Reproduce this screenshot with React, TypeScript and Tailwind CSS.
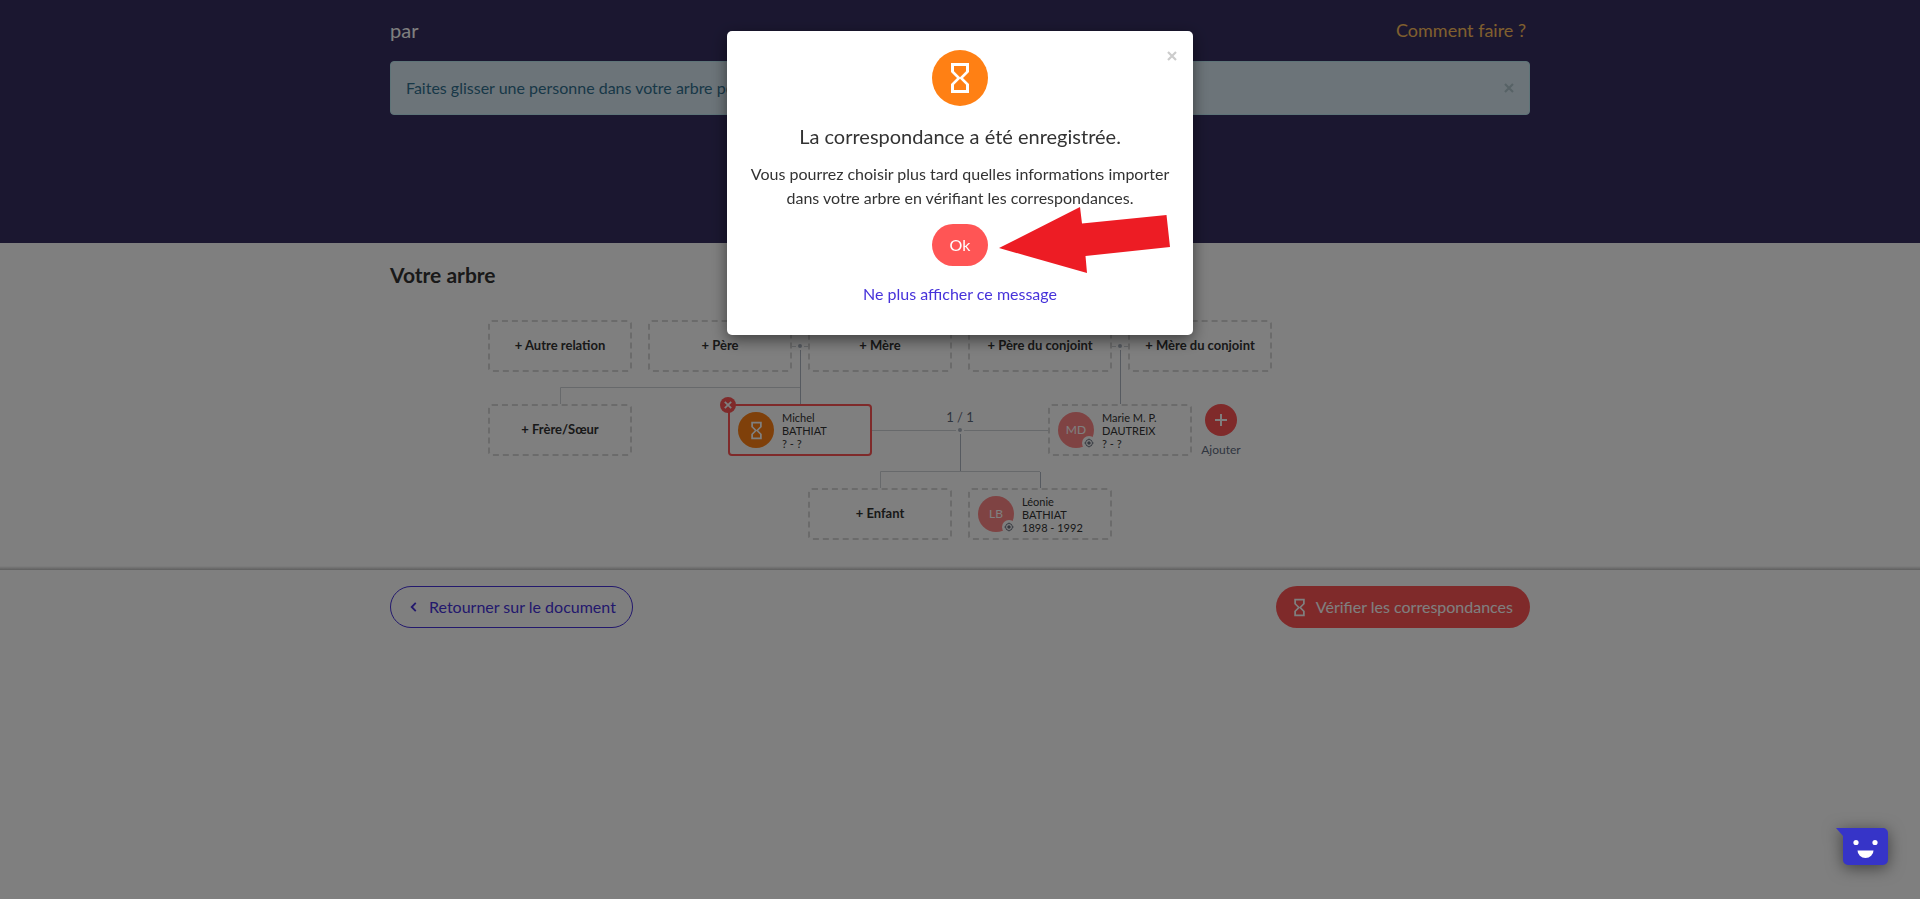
import React from "react";
import { MdHourglassEmpty, MdMyLocation } from "react-icons/md";

type Point = { left: string; top: string };

const emptySlots: { label: string; pos: Point }[] = [
  { label: "+ Autre relation", pos: { left: "left-0", top: "top-0" } },
  { label: "+ Père", pos: { left: "left-[160px]", top: "top-0" } },
  { label: "+ Mère", pos: { left: "left-[320px]", top: "top-0" } },
  { label: "+ Père du conjoint", pos: { left: "left-[480px]", top: "top-0" } },
  { label: "+ Mère du conjoint", pos: { left: "left-[640px]", top: "top-0" } },
  { label: "+ Frère/Sœur", pos: { left: "left-0", top: "top-[84px]" } },
  { label: "+ Enfant", pos: { left: "left-[320px]", top: "top-[168px]" } },
];

const people = [
  {
    initials: "",
    first: "Michel",
    last: "BATHIAT",
    dates: "? - ?",
    pos: { left: "left-[240px]", top: "top-[84px]" },
  },
  {
    initials: "MD",
    first: "Marie M. P.",
    last: "DAUTREIX",
    dates: "? - ?",
    pos: { left: "left-[560px]", top: "top-[84px]" },
  },
  {
    initials: "LB",
    first: "Léonie",
    last: "BATHIAT",
    dates: "1898 - 1992",
    pos: { left: "left-[480px]", top: "top-[168px]" },
  },
];

function Cross({ className }: { className: string }) {
  return (
    <svg viewBox="0 0 10 10" className={className} fill="none" stroke="currentColor" aria-hidden="true">
      <path d="M1 1 9 9M9 1 1 9" strokeWidth="2.2" />
    </svg>
  );
}

function Connectors() {
  return (
    <svg
      className="absolute left-0 top-0"
      width="784"
      height="220"
      viewBox="0 0 784 220"
      fill="none"
      aria-hidden="true"
    >
      <g stroke="#cfd3d7">
        <path d="M72.500 84V67.500H312" />
        <path d="M304 26.500h4M316 26.500h4M624 26.500h4M636 26.500h4" />
        <path d="M384 110.500h84M476 110.500h84" />
        <path d="M392.500 168V151.500H552" />
      </g>
      <g stroke="#acb4c0">
        <path d="M312.500 30V84M632.500 30V84M472.500 114V151M552.500 152V168" />
      </g>
      <g fill="#acb4c0">
        <circle cx="312" cy="26" r="2" />
        <circle cx="632" cy="26" r="2" />
        <circle cx="472" cy="110" r="2" />
      </g>
    </svg>
  );
}

function PersonCard({ person }: { person: (typeof people)[number] }) {
  const selected = person.initials === "";
  return (
    <div
      className={`absolute flex h-[52px] w-36 items-center gap-2 rounded border-2 bg-white pl-2 ${
        selected ? "border-[#ff5555]" : "border-dashed border-[#d6d6d6]"
      } ${person.pos.left} ${person.pos.top}`}
    >
      <div
        className={`relative flex size-9 shrink-0 items-center justify-center rounded-full text-xs text-white ${
          selected ? "bg-[#ff8014]" : "bg-[#ff8787]"
        }`}
      >
        {selected ? <MdHourglassEmpty size={21} /> : person.initials}
        {!selected && (
          <span className="absolute -bottom-0.5 -right-0.5 flex size-[14px] items-center justify-center rounded-full bg-white text-[#6b7280]">
            <MdMyLocation size={10} />
          </span>
        )}
      </div>
      <p className="text-[11px] leading-[13px] text-[#333]">
        {person.first}
        <br />
        {person.last}
        <br />
        {person.dates}
      </p>
      {selected && (
        <button
          type="button"
          aria-label="Retirer"
          className="absolute -left-[10px] -top-[9px] flex size-4 items-center justify-center rounded-full bg-[#ff5555] text-white"
        >
          <Cross className="size-2" />
        </button>
      )}
    </div>
  );
}

function FamilyTree() {
  return (
    <div className="relative ml-[98px] mt-[31px] h-[220px] w-[784px]">
      <Connectors />
      {emptySlots.map((slot) => (
        <button
          type="button"
          key={slot.label}
          className={`absolute h-[52px] w-36 rounded border-2 border-dashed border-[#d6d6d6] bg-white text-[13px] font-bold text-[#333] ${slot.pos.left} ${slot.pos.top}`}
        >
          {slot.label}
        </button>
      ))}
      {people.map((p) => (
        <PersonCard key={p.first} person={p} />
      ))}
      <span className="absolute left-[452px] top-[87px] w-10 text-center text-[13px] leading-5 text-[#5f6b7e]">
        1 / 1
      </span>
      <div className="absolute left-[709px] top-[84px] flex w-12 flex-col items-center text-xs text-[#5f6b7e]">
        <button
          type="button"
          aria-label="Ajouter"
          className="flex size-8 items-center justify-center rounded-full bg-[#ff5555] text-white"
        >
          <svg viewBox="0 0 12 12" className="size-3" stroke="currentColor" strokeWidth="2" aria-hidden="true">
            <path d="M6 0V12M0 6H12" />
          </svg>
        </button>
        <span className="mt-1.5">Ajouter</span>
      </div>
    </div>
  );
}

function ConfirmationDialog() {
  return (
    <div className="fixed inset-0 flex items-start justify-center bg-black/50 pt-[31px]">
      <div
        role="dialog"
        aria-modal="true"
        aria-labelledby="dialog-title"
        className="relative flex w-full max-w-[466px] flex-col items-center rounded-[5px] bg-white px-5 pb-[29px] pt-[19px] text-center shadow-[0_5px_15px_rgba(0,0,0,0.5)]"
      >
        <button type="button" aria-label="Fermer" className="absolute right-4 top-5 text-[#ccc]">
          <Cross className="size-[10px]" />
        </button>
        <div className="flex size-14 items-center justify-center rounded-full bg-[#ff8014] text-white">
          <MdHourglassEmpty size={36} />
        </div>
        <h2 id="dialog-title" className="mt-4 text-xl leading-7">
          La correspondance a été enregistrée.
        </h2>
        <p className="mt-3 leading-6">
          Vous pourrez choisir plus tard quelles informations importer dans votre arbre en vérifiant les
          correspondances.
        </p>
        <button type="button" className="mt-[14px] h-[42px] w-14 rounded-[21px] bg-[#ff5555] text-white">
          Ok
        </button>
        <a href="#masquer" className="mt-4 leading-6 text-[#4632da]">
          Ne plus afficher ce message
        </a>
        <svg
          className="pointer-events-none absolute left-[271px] top-[175px]"
          width="174"
          height="69"
          viewBox="0 0 174 69"
          aria-hidden="true"
        >
          <path d="M1 42 82 1 84 17.500 168.500 9 172 41 87.500 50 89 67Z" fill="#ed1c24" />
        </svg>
      </div>
    </div>
  );
}

function ChatLauncher() {
  return (
    <button
      type="button"
      aria-label="Ouvrir le chat"
      className="fixed bottom-[33px] right-8 drop-shadow-[0_3px_8px_rgba(0,0,0,0.5)]"
    >
      <svg width="52" height="38" viewBox="0 0 52 38" aria-hidden="true">
        <path d="M0 0H47a5 5 0 0 1 5 5V32a5 5 0 0 1-5 5H12a5 5 0 0 1-5-5V8Z" fill="#3634c8" />
        <circle cx="20" cy="14.500" r="2.600" fill="#fff" />
        <circle cx="39" cy="14.500" r="2.600" fill="#fff" />
        <path d="M21.500 22.500h16a8 7.500 0 0 1-16 0Z" fill="#fff" />
      </svg>
    </button>
  );
}

export default function App() {
  return (
    <div className="min-h-screen bg-white font-['Lato',sans-serif] text-base text-[#333]">
      <header className="bg-[#362f61] pb-32 pt-4">
        <div className="mx-auto max-w-[1140px]">
          <div className="flex items-center justify-between pr-1">
            <h1 className="text-xl leading-7 text-white">par</h1>
            <a href="#aide" className="text-lg leading-7 text-[#ffbf5c]">
              Comment faire ?
            </a>
          </div>
          <div className="mt-[17px] flex h-[54px] items-center justify-between rounded border border-[#bce8f1] bg-[#d9e9f3] px-[15px] text-[#31708f]">
            <p>Faites glisser une personne dans votre arbre pour l'associer au document.</p>
            <button type="button" aria-label="Fermer" className="text-[#aec4cd]">
              <Cross className="size-[10px]" />
            </button>
          </div>
        </div>
      </header>

      <main className="pt-[18px]">
        <div className="mx-auto max-w-[1140px] pb-[26px]">
          <h2 className="text-[21px] font-bold leading-7">Votre arbre</h2>
          <FamilyTree />
        </div>
        <div className="h-1 bg-linear-to-b from-transparent to-black/25" />
      </main>

      <footer className="mx-auto flex max-w-[1140px] items-center justify-between pt-4">
        <a
          href="#document"
          className="flex h-[42px] items-center gap-3 rounded-full border border-[#4632da] pl-[19px] pr-4 text-[#4632da]"
        >
          <svg viewBox="0 0 7 11" className="h-[10px] w-[7px]" fill="none" stroke="currentColor" strokeWidth="2" aria-hidden="true">
            <path d="M6 1 1.500 5.500 6 10" />
          </svg>
          Retourner sur le document
        </a>
        <button
          type="button"
          className="flex h-[42px] items-center gap-1.5 rounded-full bg-[#ff5555] pl-[13px] pr-[17px] text-white"
        >
          <MdHourglassEmpty size={21} />
          Vérifier les correspondances
        </button>
      </footer>

      <ConfirmationDialog />
      <ChatLauncher />
    </div>
  );
}
